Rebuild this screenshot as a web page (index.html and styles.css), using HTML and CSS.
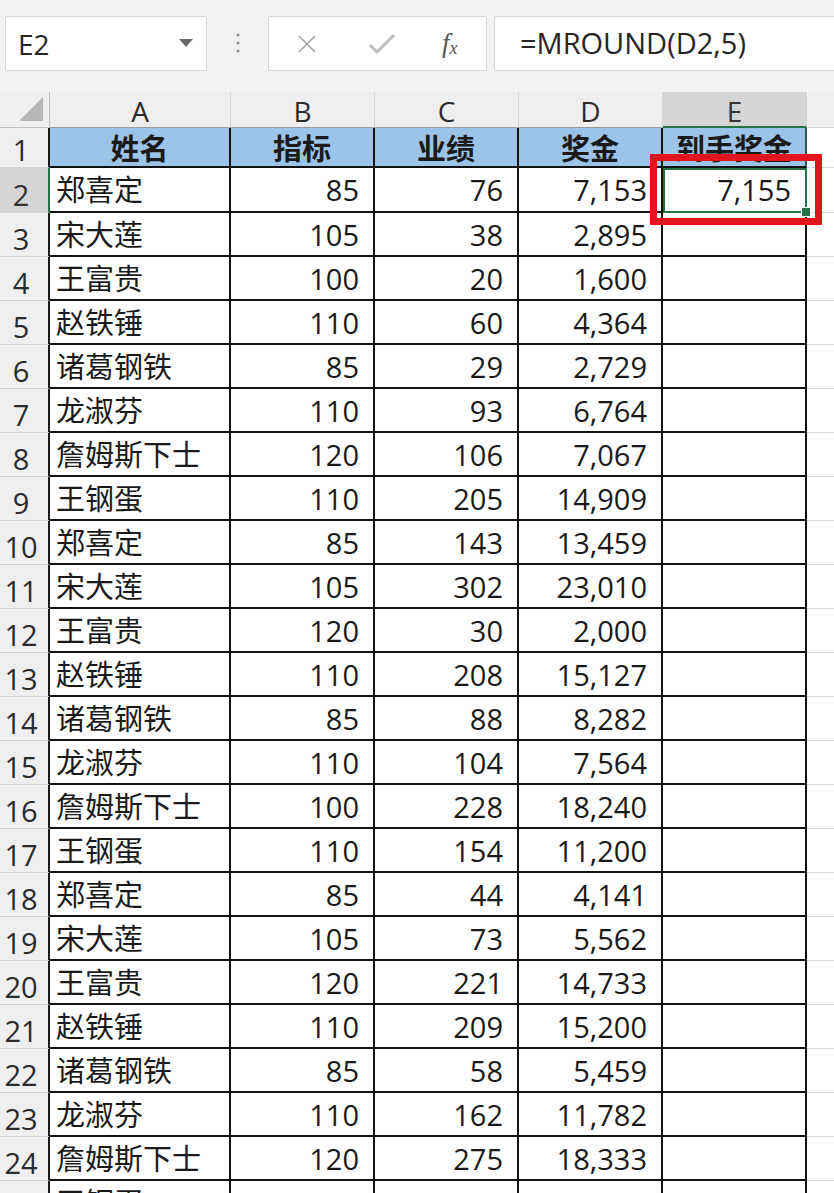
FILE: index.html
```html
<!DOCTYPE html>
<html lang="zh-CN">
<head>
<meta charset="utf-8">
<title>MROUND</title>
<link rel="stylesheet" href="styles.css">
</head>
<body>
<div class="app">
  <div class="fbar">
    <div class="namebox">
      <span class="ref">E2</span>
      <svg class="dd" width="14" height="9" viewBox="0 0 14 9"><polygon points="0,0 14,0 7,8" fill="#6a6a6a"/></svg>
    </div>
    <svg class="dots" width="6" height="24" viewBox="0 0 6 24"><circle cx="3" cy="3" r="1.5" fill="#8a8a8a"/><circle cx="3" cy="11" r="1.5" fill="#8a8a8a"/><circle cx="3" cy="19" r="1.5" fill="#8a8a8a"/></svg>
    <div class="btnbox">
      <svg class="ico" width="22" height="22" viewBox="0 0 22 22"><path d="M3 3 L19 19 M19 3 L3 19" stroke="#a3a3a3" stroke-width="1.6" fill="none"/></svg>
      <svg class="ico" width="28" height="24" viewBox="0 0 28 24"><path d="M2 13 L9 20 L26 3" stroke="#bdbdbd" stroke-width="3" fill="none"/></svg>
      <span class="fx"><i>f</i><sub>x</sub></span>
    </div>
    <div class="formula">=MROUND(D2,5)</div>
  </div>

  <div class="sheet">
    <div class="ch corner"><svg width="24" height="24" viewBox="0 0 24 24"><polygon points="24,0 24,24 0,24" fill="#b8b8b8"/></svg></div>
    <div class="ch">A</div>
    <div class="ch">B</div>
    <div class="ch">C</div>
    <div class="ch">D</div>
    <div class="ch sel">E</div>
    <div class="ch fcol"></div>

    <div class="rh">1</div>
    <div class="c hd">姓名</div>
    <div class="c hd">指标</div>
    <div class="c hd">业绩</div>
    <div class="c hd">奖金</div>
    <div class="c hd hdsel">到手奖金</div>
    <div class="f"></div>

    <div class="rh rsel">2</div>
    <div class="c t">郑喜定</div>
    <div class="c n">85</div>
    <div class="c n">76</div>
    <div class="c n">7,153</div>
    <div class="c n active">7,155<span class="handle"></span><span class="redbox"></span></div>
    <div class="f"></div>

    <div class="rh">3</div><div class="c t">宋大莲</div><div class="c n">105</div><div class="c n">38</div><div class="c n">2,895</div><div class="c n"></div><div class="f"></div>
    <div class="rh">4</div><div class="c t">王富贵</div><div class="c n">100</div><div class="c n">20</div><div class="c n">1,600</div><div class="c n"></div><div class="f"></div>
    <div class="rh">5</div><div class="c t">赵铁锤</div><div class="c n">110</div><div class="c n">60</div><div class="c n">4,364</div><div class="c n"></div><div class="f"></div>
    <div class="rh">6</div><div class="c t">诸葛钢铁</div><div class="c n">85</div><div class="c n">29</div><div class="c n">2,729</div><div class="c n"></div><div class="f"></div>
    <div class="rh">7</div><div class="c t">龙淑芬</div><div class="c n">110</div><div class="c n">93</div><div class="c n">6,764</div><div class="c n"></div><div class="f"></div>
    <div class="rh">8</div><div class="c t">詹姆斯下士</div><div class="c n">120</div><div class="c n">106</div><div class="c n">7,067</div><div class="c n"></div><div class="f"></div>
    <div class="rh">9</div><div class="c t">王钢蛋</div><div class="c n">110</div><div class="c n">205</div><div class="c n">14,909</div><div class="c n"></div><div class="f"></div>
    <div class="rh">10</div><div class="c t">郑喜定</div><div class="c n">85</div><div class="c n">143</div><div class="c n">13,459</div><div class="c n"></div><div class="f"></div>
    <div class="rh">11</div><div class="c t">宋大莲</div><div class="c n">105</div><div class="c n">302</div><div class="c n">23,010</div><div class="c n"></div><div class="f"></div>
    <div class="rh">12</div><div class="c t">王富贵</div><div class="c n">120</div><div class="c n">30</div><div class="c n">2,000</div><div class="c n"></div><div class="f"></div>
    <div class="rh">13</div><div class="c t">赵铁锤</div><div class="c n">110</div><div class="c n">208</div><div class="c n">15,127</div><div class="c n"></div><div class="f"></div>
    <div class="rh">14</div><div class="c t">诸葛钢铁</div><div class="c n">85</div><div class="c n">88</div><div class="c n">8,282</div><div class="c n"></div><div class="f"></div>
    <div class="rh">15</div><div class="c t">龙淑芬</div><div class="c n">110</div><div class="c n">104</div><div class="c n">7,564</div><div class="c n"></div><div class="f"></div>
    <div class="rh">16</div><div class="c t">詹姆斯下士</div><div class="c n">100</div><div class="c n">228</div><div class="c n">18,240</div><div class="c n"></div><div class="f"></div>
    <div class="rh">17</div><div class="c t">王钢蛋</div><div class="c n">110</div><div class="c n">154</div><div class="c n">11,200</div><div class="c n"></div><div class="f"></div>
    <div class="rh">18</div><div class="c t">郑喜定</div><div class="c n">85</div><div class="c n">44</div><div class="c n">4,141</div><div class="c n"></div><div class="f"></div>
    <div class="rh">19</div><div class="c t">宋大莲</div><div class="c n">105</div><div class="c n">73</div><div class="c n">5,562</div><div class="c n"></div><div class="f"></div>
    <div class="rh">20</div><div class="c t">王富贵</div><div class="c n">120</div><div class="c n">221</div><div class="c n">14,733</div><div class="c n"></div><div class="f"></div>
    <div class="rh">21</div><div class="c t">赵铁锤</div><div class="c n">110</div><div class="c n">209</div><div class="c n">15,200</div><div class="c n"></div><div class="f"></div>
    <div class="rh">22</div><div class="c t">诸葛钢铁</div><div class="c n">85</div><div class="c n">58</div><div class="c n">5,459</div><div class="c n"></div><div class="f"></div>
    <div class="rh">23</div><div class="c t">龙淑芬</div><div class="c n">110</div><div class="c n">162</div><div class="c n">11,782</div><div class="c n"></div><div class="f"></div>
    <div class="rh">24</div><div class="c t">詹姆斯下士</div><div class="c n">120</div><div class="c n">275</div><div class="c n">18,333</div><div class="c n"></div><div class="f"></div>
    <div class="rh">25</div><div class="c t">王钢蛋</div><div class="c n">100</div><div class="c n">248</div><div class="c n">18,240</div><div class="c n"></div><div class="f"></div>
  </div>
</div>
</body>
</html>
```

FILE: styles.css
```css
html, body {
  margin: 0;
  padding: 0;
}
body {
  width: 834px;
  height: 1193px;
  overflow: hidden;
  background: #f2f2f2;
  font-family: "Open Sans", "Noto Sans CJK SC", sans-serif;
  color: #1b1b1b;
}
.app {
  width: 834px;
}

/* formula bar */
.fbar {
  height: 92px;
  box-sizing: border-box;
  padding: 16px 0 0 5px;
  display: flex;
  align-items: flex-start;
  background: #f2f2f2;
}
.namebox {
  width: 202px;
  height: 55px;
  box-sizing: border-box;
  background: #fff;
  border: 1px solid #d6d6d6;
  border-radius: 2px;
  display: flex;
  align-items: center;
  justify-content: space-between;
  padding: 0 13px 0 12px;
}
.ref {
  font-size: 28px;
  color: #262626;
  line-height: 1;
}
.dd {
  display: block;
}
.dots {
  margin: 16px 27px 0 28px;
  display: block;
}
.btnbox {
  width: 219px;
  height: 55px;
  box-sizing: border-box;
  background: #fff;
  border: 1px solid #d6d6d6;
  border-radius: 2px;
  display: flex;
  align-items: center;
  padding: 0 0 0 27px;
}
.btnbox .ico {
  display: block;
}
.btnbox .ico:first-child {
  margin-right: 50px;
}
.fx {
  margin-left: 46px;
  font-family: "Liberation Serif", serif;
  color: #555;
  font-size: 27px;
  line-height: 1;
}
.fx sub {
  font-size: 18px;
  font-style: italic;
  vertical-align: baseline;
  position: relative;
  top: 2px;
}
.formula {
  margin-left: 7px;
  flex: 1;
  height: 55px;
  box-sizing: border-box;
  background: #fff;
  border: 1px solid #d6d6d6;
  border-right: none;
  border-radius: 2px 0 0 2px;
  padding-left: 25px;
  font-size: 29px;
  line-height: 52px;
  color: #262626;
  white-space: nowrap;
}

/* sheet */
.sheet {
  display: grid;
  grid-template-columns: 50px 181px 144px 144px 144px 144px 27px;
  grid-template-rows: 36px 40px 45px repeat(23, 44px);
  background: #fff;
}
.ch {
  background: #efefef;
  border-right: 1px solid #d4d4d4;
  border-bottom: 1px solid #9a9a9a;
  box-sizing: border-box;
  font-size: 28px;
  color: #2b2b2b;
  text-align: center;
  line-height: 38px;
}
.ch.corner {
  display: flex;
  align-items: flex-end;
  justify-content: flex-end;
  padding: 0 6px 6px 0;
  border-right: 1px solid #bfbfbf;
  border-bottom: 1px solid #bfbfbf;
}
.ch.corner svg {
  display: block;
}
.ch.sel {
  background: #d5d5d5;
  border-bottom: 2px solid #217346;
  color: #333;
}
.ch.fcol {
  border-right: none;
  border-bottom: 1px solid #d4d4d4;
}
.rh {
  background: #efefef;
  border-bottom: 1px solid #d4d4d4;
  border-right: 2px solid #1a1a1a;
  box-sizing: border-box;
  font-size: 29px;
  color: #2b2b2b;
  text-align: center;
  padding-right: 6px;
  display: flex;
  align-items: flex-end;
  justify-content: center;
  line-height: 1;
  padding-bottom: 3px;
}
.rh.rsel {
  background: #d5d5d5;
  border-right: 2px solid #217346;
  color: #333;
}
.c {
  border-right: 2px solid #111;
  border-bottom: 2px solid #111;
  box-sizing: border-box;
  font-size: 29px;
  line-height: 1;
  display: flex;
  align-items: center;
  white-space: nowrap;
  overflow: hidden;
  color: #1a1a1a;
}
.c.hd {
  background: #9cc3e8;
  font-weight: bold;
  justify-content: center;
  font-size: 29px;
  padding-top: 2px;
}
.c.hdsel {
  border-right-color: #2a5c3f;
}
.c.t {
  padding-left: 6px;
}
.c.n {
  justify-content: flex-end;
  padding-right: 14px;
}
.f {
  border-bottom: 1px solid #d9d9d9;
  box-sizing: border-box;
  background: #fff;
}
.c.active {
  position: relative;
  overflow: visible;
  border-color: #217346;
  box-shadow: inset 2px 2px 0 #217346;
}
.handle {
  position: absolute;
  right: -6px;
  bottom: -6px;
  width: 8px;
  height: 8px;
  background: #217346;
  border: 1px solid #fff;
}
.redbox {
  position: absolute;
  left: -13px;
  top: -14px;
  width: 172px;
  height: 71px;
  box-sizing: border-box;
  border: 7px solid #e3141d;
}
```
